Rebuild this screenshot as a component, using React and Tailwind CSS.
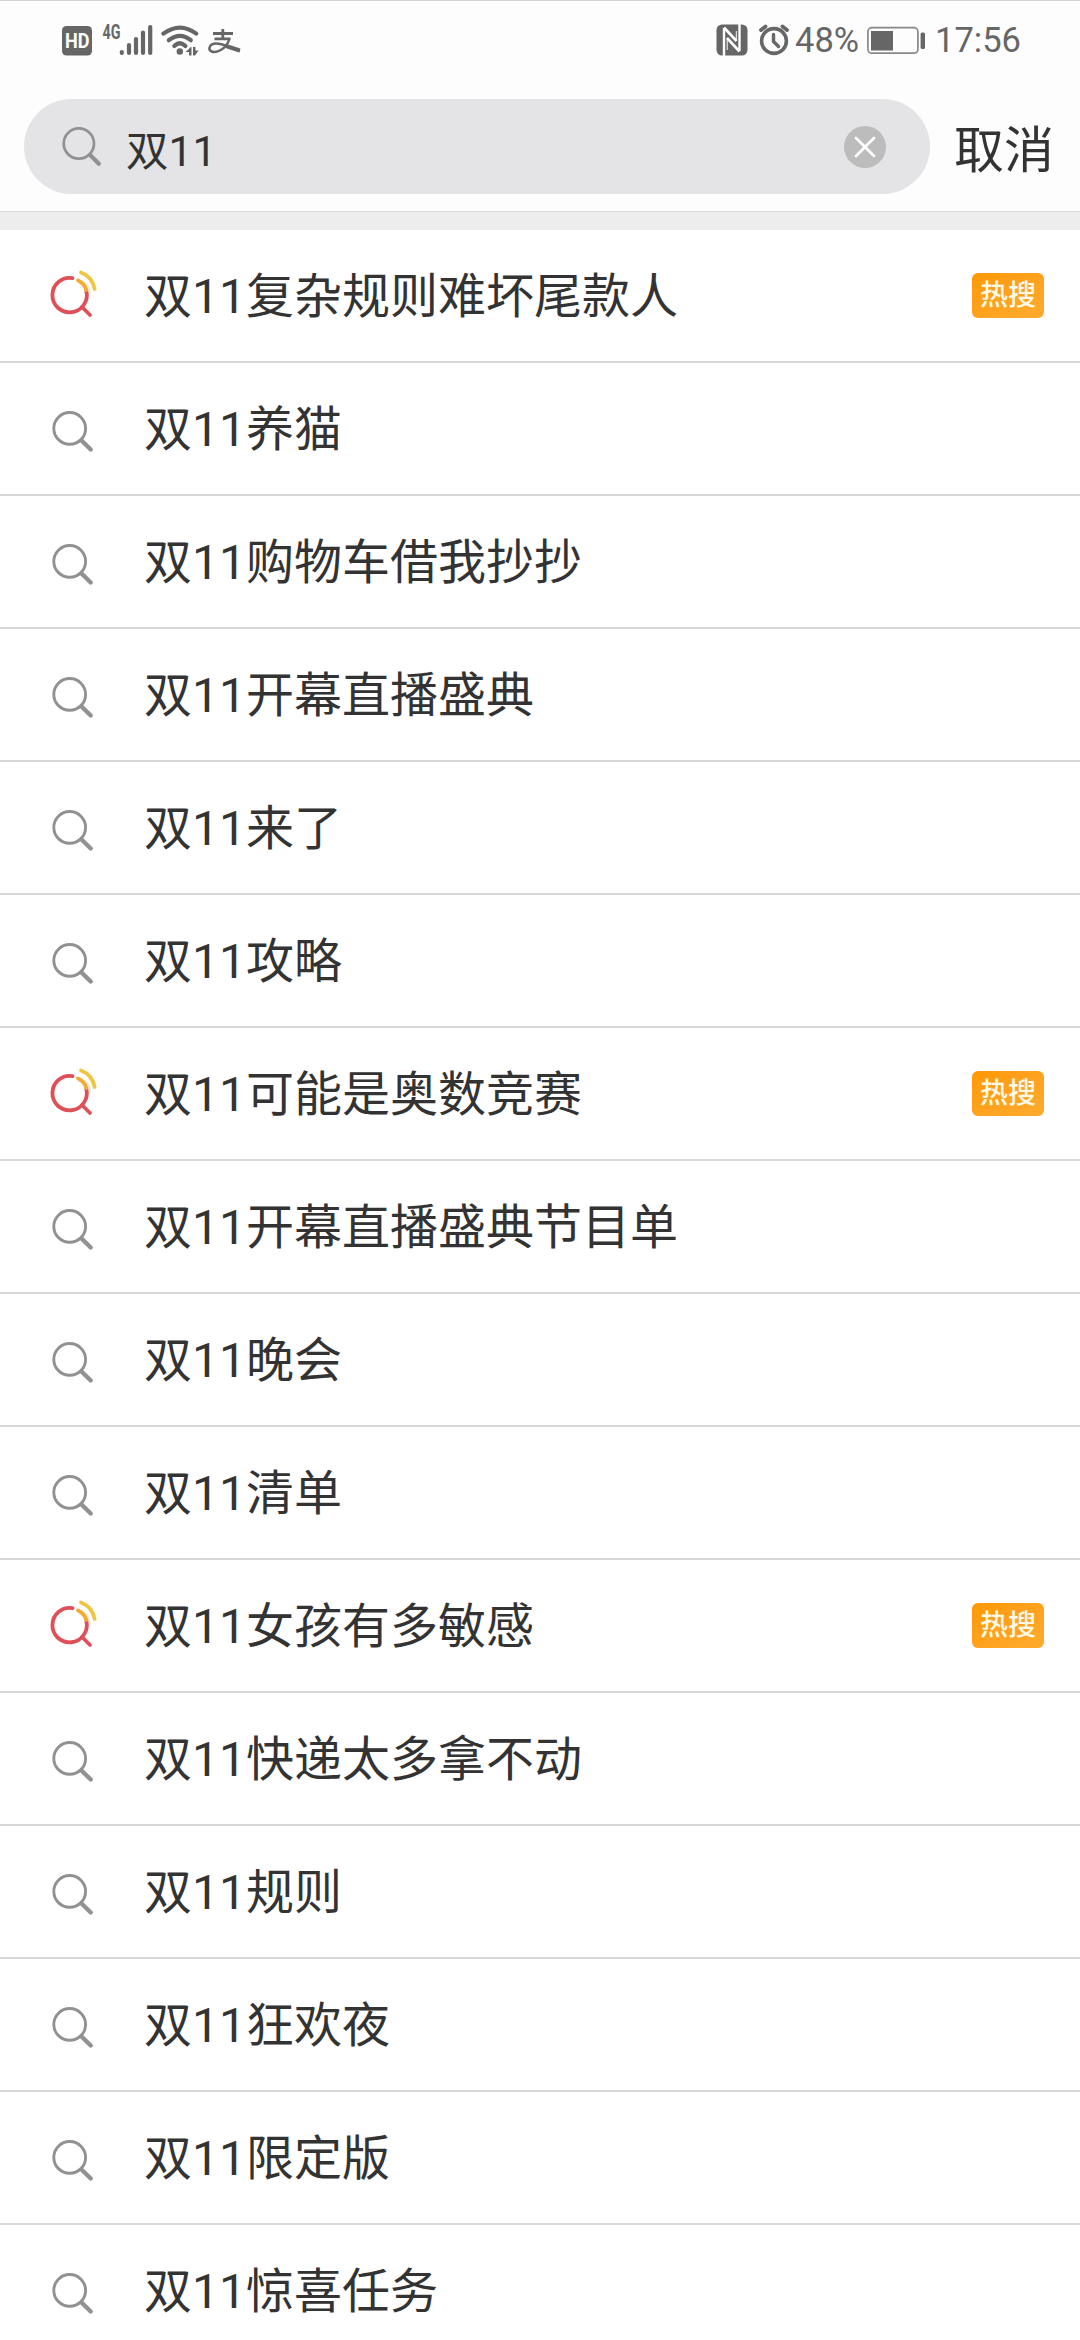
import React, { useState } from "react";

const suggestions = [
  { text: "双11复杂规则难坏尾款人", hot: true },
  { text: "双11养猫" },
  { text: "双11购物车借我抄抄" },
  { text: "双11开幕直播盛典" },
  { text: "双11来了" },
  { text: "双11攻略" },
  { text: "双11可能是奥数竞赛", hot: true },
  { text: "双11开幕直播盛典节目单" },
  { text: "双11晚会" },
  { text: "双11清单" },
  { text: "双11女孩有多敏感", hot: true },
  { text: "双11快递太多拿不动" },
  { text: "双11规则" },
  { text: "双11狂欢夜" },
  { text: "双11限定版" },
  { text: "双11惊喜任务" },
];

const SearchIcon = ({ className }) => (
  <svg className={className} viewBox="0 0 42 42" fill="none" stroke="#919193">
    <circle cx="17.7" cy="17.4" r="15.9" strokeWidth="2.9" />
    <path d="M29.5 29.5 L38.7 38.5" strokeWidth="4.4" strokeLinecap="round" />
  </svg>
);

const HotSearchIcon = () => (
  <svg
    className="mb-[3px] ml-[2px] h-12 w-12"
    viewBox="0 0 48 48"
    fill="none"
    strokeWidth="3.8"
    strokeLinecap="round"
  >
    <path d="M30 10 Q41 13 41 24 L36 24 Q34 15 28 14Z" fill="#fbe9d8" />
    <path d="M22.5 8.2 A17.2 17.2 0 1 0 36.3 21" stroke="#df4f58" />
    <path d="M32 37 L40 45" stroke="#df4f58" />
    <path d="M28 10.4 Q34.5 13.5 36.3 20" stroke="#f0ab30" />
    <path d="M31 2.5 Q42.5 7 44.6 19" stroke="#efc544" />
  </svg>
);

const StatusBar = () => (
  <div className="flex h-[80px] items-start justify-between border-t border-[#d4d4d4] pr-[62px] pl-[60px] text-[#666]">
    <svg className="h-[79px] w-[184px]" viewBox="60 1 184 79" fill="#666">
      <rect x="62" y="26" width="30" height="29.5" rx="4.5" />
      <text
        x="65"
        y="48"
        fill="#fff"
        fontSize="19.5"
        fontWeight="700"
        fontFamily="Roboto, sans-serif"
        textLength="24.5"
        lengthAdjust="spacingAndGlyphs"
      >
        HD
      </text>
      <text
        x="102.5"
        y="38.5"
        fontSize="19.5"
        fontWeight="700"
        fontFamily="Roboto, sans-serif"
        textLength="18"
        lengthAdjust="spacingAndGlyphs"
      >
        4G
      </text>
      <g stroke="#666" strokeWidth="4.2" strokeLinecap="round" fill="none">
        <path d="M121.8 52 V53 M129 45 V53 M136 39 V53 M143 32.5 V53 M150.2 27 V53" />
        <path d="M163.3 33.6 Q180 21.5 196.3 33.6" />
        <path d="M168.8 40.2 Q180 31.5 190.8 40.2" />
        <path d="M174.3 46 Q180 40.5 185.4 46" />
      </g>
      <circle cx="179.8" cy="51.5" r="3.2" />
      <path d="M185.5 52 L191.5 46.5 V55.5 H189 V52Z M193 47 V55.5 H195 L198.5 50.5 H195.5 V47Z" />
      <g stroke="#666" fill="none">
        <path d="M213 33.5 H233 M222.8 29 V39 M214.5 38.8 H230.5" strokeWidth="2.8" />
        <path
          d="M229.5 38.8 C226 49 217 53.5 211.5 51.5 C207.5 49.5 209.5 43.5 216 43.5 C223 43.5 230 47.5 240 51"
          strokeWidth="2.4"
        />
        <path d="M226 46 L239.8 50.5" strokeWidth="4" />
      </g>
    </svg>

    <div className="flex h-[79px] items-center font-[Roboto,sans-serif] text-[34.5px] leading-none">
      <svg className="h-[79px] w-[78px]" viewBox="716 1 78 79" fill="#666">
        <rect x="716.5" y="24.5" width="31" height="31" rx="5.5" />
        <g fill="none" stroke="#fdfdfd">
          <path d="M724 56 V28" strokeWidth="2.4" />
          <path d="M739.5 24 V51" strokeWidth="2.4" />
          <path d="M724 27.5 L736.5 41" strokeWidth="2.6" />
          <path d="M727 38 L739.5 51.5" strokeWidth="2.6" />
          <path d="M727.2 38 V50 M736.3 31 V41" strokeWidth="1" />
        </g>
        <g fill="none" stroke="#666" strokeLinecap="round">
          <circle cx="774" cy="41" r="12.4" strokeWidth="3.6" />
          <path d="M773.5 34.5 V41.5 L778.5 46.5" strokeWidth="3.4" />
          <path d="M761 30 L765.5 26.5 M787 30 L782.5 26.5" strokeWidth="3.8" />
        </g>
      </svg>
      <span className="ml-[1px] w-[72px]">48%</span>
      <svg className="h-[79px] w-[60px]" viewBox="867 1 60 79" fill="#666">
        <rect
          x="867.9"
          y="27.7"
          width="50"
          height="25.5"
          rx="4"
          fill="none"
          stroke="#888"
          strokeWidth="1.7"
        />
        <rect x="871" y="31" width="22" height="19.5" />
        <rect x="920.6" y="32.5" width="4.4" height="16.5" rx="1.5" />
      </svg>
      <span className="ml-[8px] w-[83px]">17:56</span>
    </div>
  </div>
);

const SuggestionRow = ({ text, hot }) => (
  <li className="flex h-[133px] items-center border-b-2 border-[#d7d7d7] pr-9 pl-[48px]">
    <div className="w-[96px] shrink-0">
      {hot ? <HotSearchIcon /> : <SearchIcon className="mt-[7px] ml-[4px] h-[42px] w-[42px]" />}
    </div>
    <span className="flex-1 pt-[2px] text-[48px] leading-none whitespace-nowrap">{text}</span>
    {hot && (
      <span className="flex h-[45px] w-[72px] items-center justify-center rounded-md bg-gradient-to-br from-[#ff9800] to-[#ffab2e] pt-[1px] text-[28px] leading-none font-medium text-[#fffbe6]">
        热搜
      </span>
    )}
  </li>
);

const App = () => {
  const [keyword, setKeyword] = useState("双11");

  return (
    <div className="h-[2340px] w-[1080px] overflow-hidden bg-white font-[Roboto,'Noto_Sans_CJK_SC',sans-serif] text-[#333]">
      <header className="h-[212px] border-b border-[#d9d9d9] bg-[#fdfdfd]">
        <StatusBar />
        <div className="flex items-center pt-[19px] pl-6">
          <div className="flex h-[95px] w-[906px] items-center rounded-full bg-[#e4e4e6] pr-11 pl-[38px]">
            <SearchIcon className="h-[40px] w-[40px] shrink-0" />
            <input
              className="ml-[24px] h-[64px] min-w-0 flex-1 pt-[1px] text-[42.5px] outline-none"
              value={keyword}
              onChange={(e) => setKeyword(e.target.value)}
            />
            <button onClick={() => setKeyword("")}>
              <svg className="h-[42px] w-[42px]" viewBox="0 0 42 42">
                <circle cx="21" cy="21" r="21" fill="#bcbcbc" />
                <path
                  d="M12 12 L30 30 M30 12 L12 30"
                  stroke="#fff"
                  strokeWidth="2.7"
                  strokeLinecap="round"
                />
              </svg>
            </button>
          </div>
          <button className="ml-[24px] pt-[9px] text-[50px] leading-none whitespace-nowrap">
            取消
          </button>
        </div>
      </header>
      <div className="h-[18px] bg-[#ededed]" />
      <ul>
        {suggestions.map((item) => (
          <SuggestionRow key={item.text} {...item} />
        ))}
      </ul>
    </div>
  );
};

export default App;
